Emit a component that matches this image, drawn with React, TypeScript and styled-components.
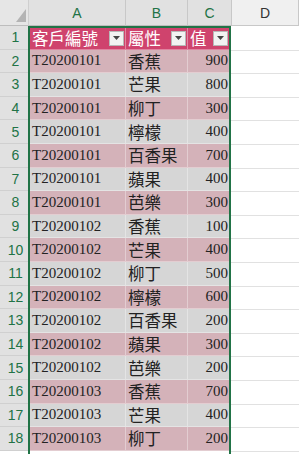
import React from 'react';
import styled, { createGlobalStyle } from 'styled-components';

const GlobalStyle = createGlobalStyle`
  html, body {
    margin: 0;
    padding: 0;
    background: #ffffff;
    overflow: hidden;
  }
`;

const ROW_H = 23.6;
const HEAD_H = 26;
const GREEN = '#217346';
const SERIF = `'Liberation Serif', 'Times New Roman', 'Noto Sans CJK TC', serif`;
const SANS = `'Liberation Sans', Arial, sans-serif`;

const rows: [string, string, number][] = [
  ['T20200101', '香蕉', 900],
  ['T20200101', '芒果', 800],
  ['T20200101', '柳丁', 300],
  ['T20200101', '檸檬', 400],
  ['T20200101', '百香果', 700],
  ['T20200101', '蘋果', 400],
  ['T20200101', '芭樂', 300],
  ['T20200102', '香蕉', 100],
  ['T20200102', '芒果', 400],
  ['T20200102', '柳丁', 500],
  ['T20200102', '檸檬', 600],
  ['T20200102', '百香果', 200],
  ['T20200102', '蘋果', 300],
  ['T20200102', '芭樂', 200],
  ['T20200103', '香蕉', 700],
  ['T20200103', '芒果', 400],
  ['T20200103', '柳丁', 200],
];

const Sheet = styled.div`
  width: 299px;
  height: 454px;
  overflow: hidden;
  display: flex;
  flex-direction: column;
`;

const ColumnHeaderBar = styled.div`
  display: flex;
  height: ${HEAD_H}px;
  flex-shrink: 0;
`;

const Corner = styled.div`
  width: 29px;
  height: 100%;
  background: #e6e6e6;
  border-right: 1px solid #cfcfcf;
  border-bottom: 1px solid #bdbdbd;
  box-sizing: border-box;
  position: relative;
  flex-shrink: 0;

  svg {
    position: absolute;
    right: 2px;
    bottom: 3px;
  }
`;

const ColHead = styled.div<{ $w: number; $active?: boolean }>`
  width: ${(p) => p.$w}px;
  flex: ${(p) => (p.$w ? 'none' : '1')};
  height: 100%;
  box-sizing: border-box;
  display: flex;
  align-items: center;
  justify-content: center;
  font-family: ${SANS};
  font-size: 14px;
  color: ${(p) => (p.$active ? GREEN : '#333')};
  background: ${(p) => (p.$active ? '#e1e1e1' : '#f0f0f0')};
  border-right: 1px solid #c8c8c8;
  border-bottom: 1px solid ${(p) => (p.$active ? '#bdbdbd' : '#c8c8c8')};
`;

const Body = styled.div`
  display: flex;
  flex: 1;
`;

const RowHeaders = styled.div`
  width: 29px;
  flex-shrink: 0;
  display: flex;
  flex-direction: column;
`;

const RowHead = styled.div`
  height: ${ROW_H}px;
  box-sizing: border-box;
  display: flex;
  align-items: center;
  justify-content: center;
  padding-left: 2px;
  background: #e1e1e1;
  color: ${GREEN};
  font-family: ${SANS};
  font-size: 14px;
  border-bottom: 1px solid #d0d0d0;
`;

const Table = styled.div`
  width: 203px;
  flex-shrink: 0;
  box-sizing: border-box;
  border: 2px solid ${GREEN};
  border-bottom: none;
  margin-left: -1px;
  display: flex;
  flex-direction: column;
`;

const Row = styled.div<{ $kind: 'head' | 'pink' | 'gray' }>`
  display: grid;
  grid-template-columns: 96px 62px 1fr;
  height: ${ROW_H}px;
  flex-shrink: 0;
  background: ${(p) =>
    p.$kind === 'head' ? '#cf436d' : p.$kind === 'pink' ? '#d4b2b9' : '#d6d6d6'};
  color: ${(p) => (p.$kind === 'head' ? '#ffffff' : '#222222')};
  &:first-child {
    height: ${ROW_H - 2}px;
  }
`;

const Cell = styled.div<{ $cjk?: boolean; $num?: boolean }>`
  display: flex;
  align-items: center;
  justify-content: ${(p) => (p.$num ? 'flex-end' : 'flex-start')};
  padding: 0 ${(p) => (p.$num ? '1px' : '0')} 0 2px;
  font-family: ${SERIF};
  font-size: ${(p) => (p.$cjk ? '16.5px' : '15px')};
  border-right: 1px solid rgba(255, 255, 255, 0.35);
  border-bottom: 1px solid rgba(255, 255, 255, 0.35);
  white-space: nowrap;
  overflow: hidden;
  &:last-child {
    border-right: none;
  }
`;

const HeadCell = styled(Cell)`
  justify-content: space-between;
  padding-right: 1px;
`;

const FilterButton = styled.div`
  width: 15px;
  height: 15px;
  flex-shrink: 0;
  box-sizing: border-box;
  background: #f2f2f2;
  border: 1px solid #b8b8b8;
  display: flex;
  align-items: center;
  justify-content: center;
`;

const EmptyColumn = styled.div`
  flex: 1;
  display: flex;
  flex-direction: column;
`;

const EmptyCell = styled.div`
  height: ${ROW_H}px;
  flex-shrink: 0;
  box-sizing: border-box;
  border-bottom: 1px solid #e1e1e1;
  &:first-child {
    height: ${ROW_H + 1}px;
  }
`;

const Filter = () => (
  <FilterButton>
    <svg width="7" height="4" viewBox="0 0 7 4">
      <path d="M0 0h7L3.5 4z" fill="#444" />
    </svg>
  </FilterButton>
);

const App: React.FC = () => {
  return (
    <>
      <GlobalStyle />
      <Sheet>
        <ColumnHeaderBar>
          <Corner>
            <svg width="10" height="13" viewBox="0 0 10 13">
              <path d="M10 0V13H0z" fill="#b4b4b4" />
            </svg>
          </Corner>
          <ColHead $w={97} $active>A</ColHead>
          <ColHead $w={62} $active>B</ColHead>
          <ColHead $w={44} $active>C</ColHead>
          <ColHead $w={0}>D</ColHead>
        </ColumnHeaderBar>
        <Body>
          <RowHeaders>
            {Array.from({ length: 18 }, (_, i) => (
              <RowHead key={i}>{i + 1}</RowHead>
            ))}
          </RowHeaders>
          <Table>
            <Row $kind="head">
              <HeadCell $cjk>
                客戶編號
                <Filter />
              </HeadCell>
              <HeadCell $cjk>
                屬性
                <Filter />
              </HeadCell>
              <HeadCell $cjk>
                值
                <Filter />
              </HeadCell>
            </Row>
            {rows.map(([id, kind, value], i) => (
              <Row key={i} $kind={i % 2 === 0 ? 'pink' : 'gray'}>
                <Cell>{id}</Cell>
                <Cell $cjk>{kind}</Cell>
                <Cell $num>{value}</Cell>
              </Row>
            ))}
          </Table>
          <EmptyColumn>
            {Array.from({ length: 18 }, (_, i) => (
              <EmptyCell key={i} />
            ))}
          </EmptyColumn>
        </Body>
      </Sheet>
    </>
  );
};

export default App;
